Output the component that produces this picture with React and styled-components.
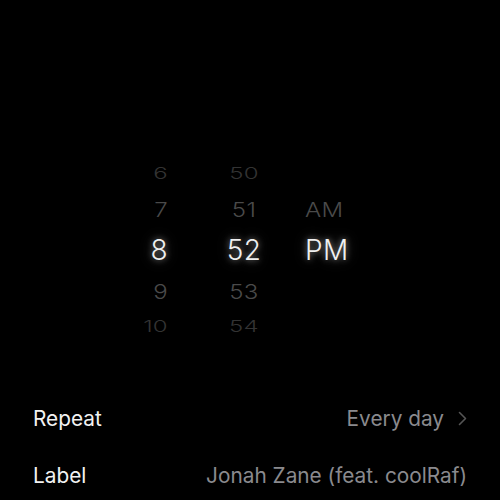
import React from "react";
import styled, { createGlobalStyle } from "styled-components";

const GlobalStyles = createGlobalStyle`
  html, body {
    margin: 0;
    padding: 0;
    background: #000;
    font-family: Inter, "Liberation Sans", sans-serif;
  }
`;

const Screen = styled.div`
  width: 500px;
  height: 500px;
  overflow: hidden;
  background: #000;
  display: flex;
  flex-direction: column;
  padding-top: 157px;
  box-sizing: border-box;
`;

const Picker = styled.div`
  display: grid;
  grid-template-columns: 168px 120px 1fr;
  height: 184px;
`;

const Wheel = styled.div`
  display: flex;
  flex-direction: column;
  align-items: ${({ $align }) => $align};
  padding-left: ${({ $pad }) => $pad || 0}px;
`;

const Cell = styled.div`
  height: ${({ $h }) => $h}px;
  display: flex;
  align-items: center;
  font-size: ${({ $active }) => ($active ? 28 : 24)}px;
  font-weight: 300;
  color: ${({ $tone }) => $tone};
  letter-spacing: 0.3px;
  text-shadow: ${({ $active }) =>
    $active ? "0 0 6px rgba(255,255,255,0.5), 0 0 14px rgba(255,255,255,0.25)" : "none"};
  transform: scaleY(${({ $squash }) => $squash || 1});
  transform-origin: center;
`;

const List = styled.div`
  margin-top: 49px;
  display: flex;
  flex-direction: column;
`;

const Row = styled.div`
  height: 57px;
  display: flex;
  align-items: center;
  justify-content: space-between;
  padding: 0 33px;
  font-size: 20.8px;
`;

const Key = styled.span`
  color: #f2f2f2;
`;

const Value = styled.span`
  color: #8a8a8e;
  display: flex;
  align-items: center;
  gap: 14px;
`;

const rows = [
  { h: 32, tone: "#333", squash: 0.66 },
  { h: 40, tone: "#4a4a4a", squash: 0.86 },
  { h: 42, tone: "#f0f0f0", active: true },
  { h: 40, tone: "#4a4a4a", squash: 0.86 },
  { h: 30, tone: "#333", squash: 0.66 },
];

const hours = ["6", "7", "8", "9", "10"];
const minutes = ["50", "51", "52", "53", "54"];
const period = ["", "AM", "PM", "", ""];

const Chevron = () => (
  <svg width="9" height="15" viewBox="0 0 9 15" fill="none">
    <path d="M1.5 1.5 L7.5 7.5 L1.5 13.5" stroke="#555" strokeWidth="1.6" strokeLinecap="round" strokeLinejoin="round" />
  </svg>
);

const Column = ({ items, align, pad }) => (
  <Wheel $align={align} $pad={pad}>
    {items.map((t, i) => (
      <Cell key={i} $h={rows[i].h} $tone={rows[i].tone} $active={rows[i].active} $squash={rows[i].squash}>
        {t}
      </Cell>
    ))}
  </Wheel>
);

export default function App() {
  return (
    <>
      <GlobalStyles />
      <Screen>
        <Picker>
          <Column items={hours} align="flex-end" />
          <Column items={minutes} align="center" pad={32} />
          <Column items={period} align="flex-start" pad={17} />
        </Picker>
        <List>
          <Row>
            <Key>Repeat</Key>
            <Value>
              Every day
              <Chevron />
            </Value>
          </Row>
          <Row>
            <Key>Label</Key>
            <Value>Jonah Zane (feat. coolRaf)</Value>
          </Row>
        </List>
      </Screen>
    </>
  );
}
